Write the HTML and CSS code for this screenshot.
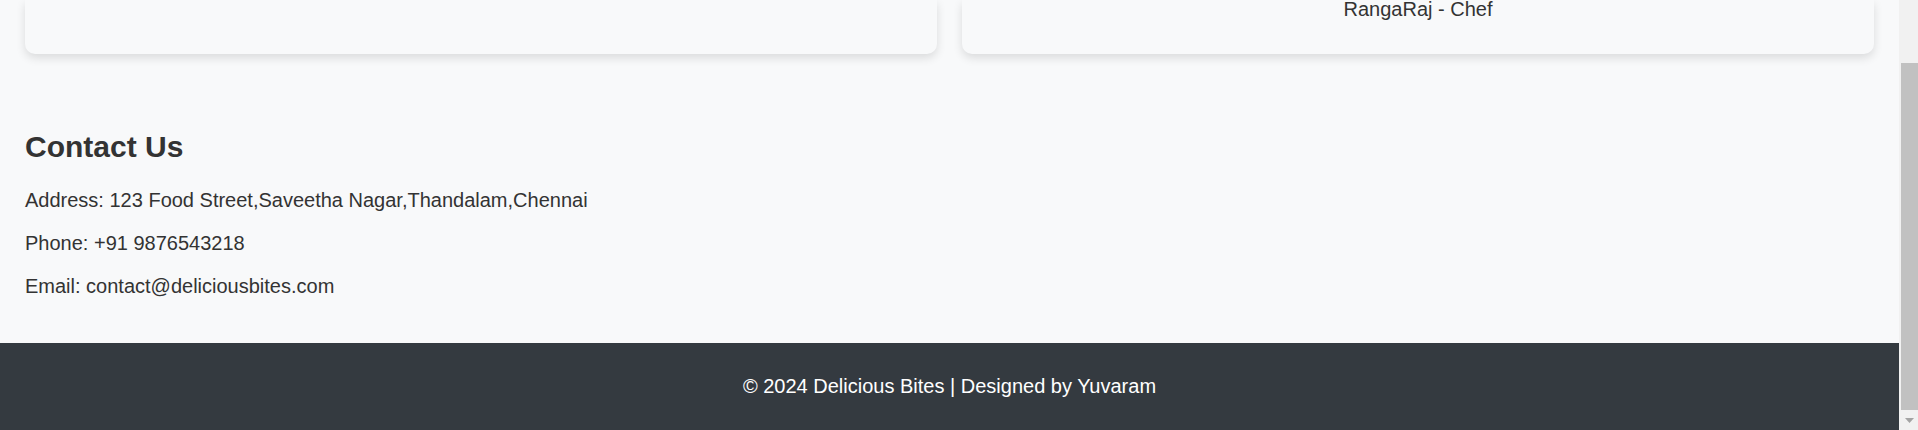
FILE: index.html
```html
<!DOCTYPE html>
<html lang="en">
<head>
<meta charset="utf-8">
<title>Delicious Bites</title>
<link rel="stylesheet" href="styles.css">
</head>
<body>
<div class="page">
  <main class="main">
    <section class="team">
      <div class="card"></div>
      <div class="card">
        <p class="card-caption">RangaRaj - Chef</p>
      </div>
    </section>
    <section class="contact">
      <h2>Contact Us</h2>
      <p>Address: 123 Food Street,Saveetha Nagar,Thandalam,Chennai</p>
      <p>Phone: +91 9876543218</p>
      <p>Email: contact@deliciousbites.com</p>
    </section>
    <footer class="footer">
      <p>&copy; 2024 Delicious Bites | Designed by Yuvaram</p>
    </footer>
  </main>
  <div class="scrollbar" aria-hidden="true">
    <div class="scroll-thumb"></div>
    <div class="scroll-btn">
      <svg width="9" height="5" viewBox="0 0 9 5"><polygon points="0,0 9,0 4.5,5" fill="#a3a3a3"/></svg>
    </div>
  </div>
</div>
</body>
</html>
```

FILE: styles.css
```css
html, body {
  margin: 0;
  padding: 0;
  height: 430px;
  overflow: hidden;
}

body {
  font-family: "Liberation Sans", Arial, sans-serif;
  font-size: 20px;
  color: #333;
  background: #f8f9fa;
}

.page {
  display: flex;
  height: 430px;
}

.main {
  flex: 1;
  display: flex;
  flex-direction: column;
  min-width: 0;
}

.team {
  display: grid;
  grid-template-columns: 1fr 1fr;
  gap: 25px;
  padding: 0 25px 25px;
}

.card {
  background: #f8f9fa;
  border-radius: 0 0 10px 10px;
  box-shadow: 0 4px 10px rgba(0, 0, 0, 0.12);
  padding: 0 12px 13px;
  text-align: center;
}

.card-caption {
  margin: -2px 0 20px;
}

.contact {
  padding: 26px 25px 25px;
}

.contact h2 {
  font-size: 30px;
  font-weight: bold;
  margin: 25px 0;
  color: #333;
}

.contact p {
  margin: 0 0 20px;
}

.footer {
  flex: 1;
  background: #343a40;
  color: #fff;
  text-align: center;
  padding: 32px 0;
}

.footer p {
  margin: 0;
}

.scrollbar {
  width: 19px;
  background: #f1f1f1;
  display: flex;
  flex-direction: column;
  align-items: flex-end;
}

.scroll-thumb {
  margin-top: 63px;
  width: 17px;
  height: 347px;
  background: #c1c1c1;
}

.scroll-btn {
  width: 17px;
  height: 20px;
  display: flex;
  align-items: center;
  justify-content: center;
}
```
